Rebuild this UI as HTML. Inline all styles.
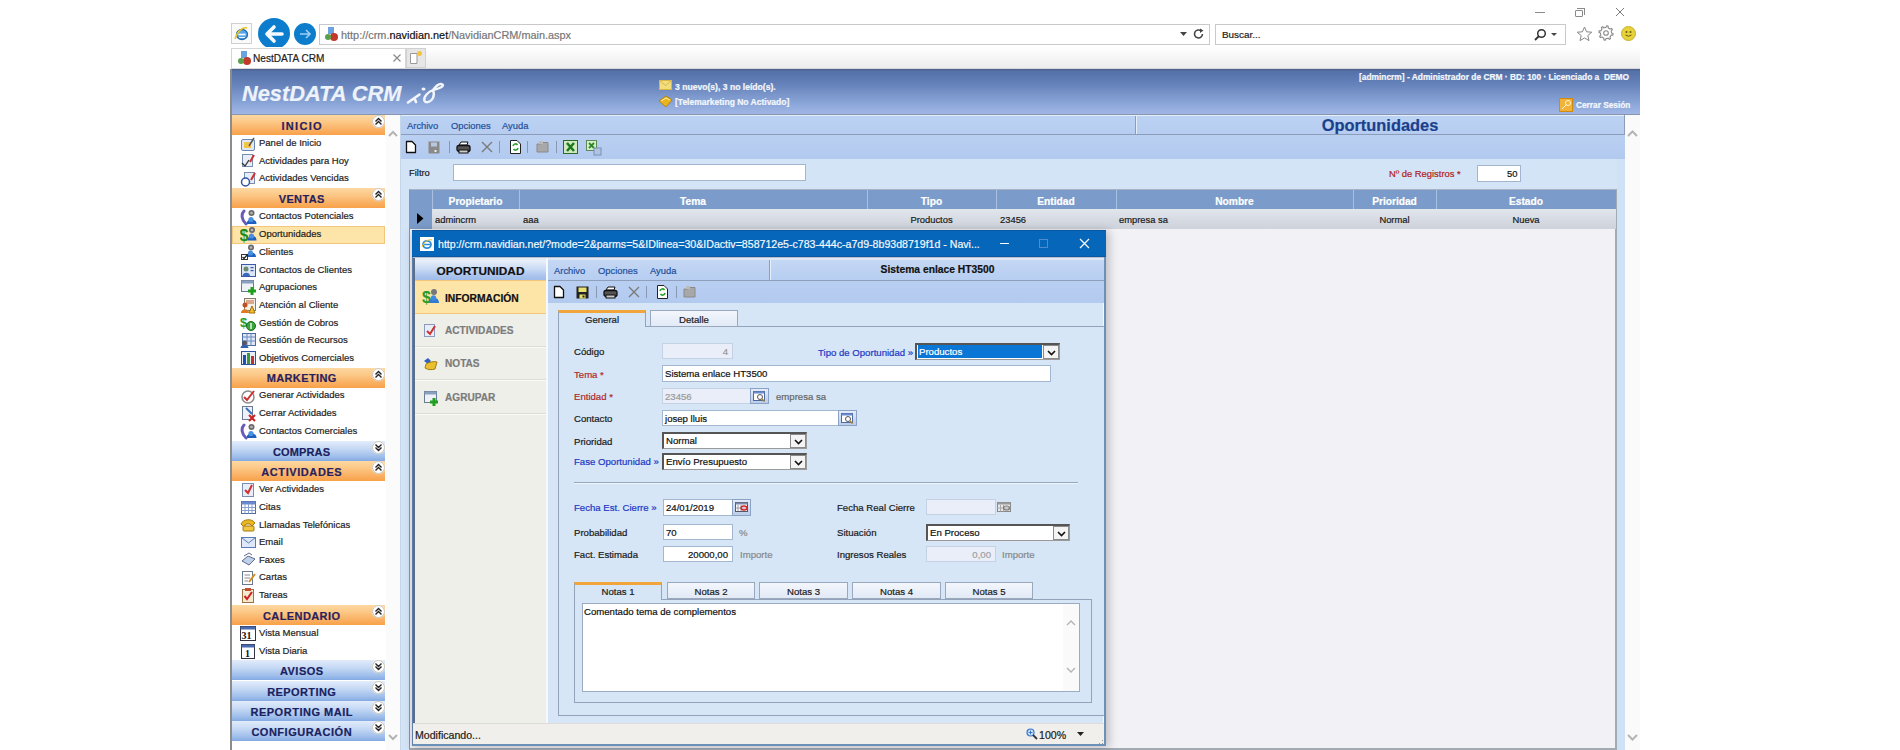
<!DOCTYPE html>
<html><head><meta charset="utf-8">
<style>
*{margin:0;padding:0;box-sizing:border-box}
html,body{width:1900px;height:750px;overflow:hidden;background:#fff;font-family:"Liberation Sans",sans-serif;color:#1a1a1a}
.a{position:absolute}
.t{position:absolute;white-space:nowrap;line-height:1;-webkit-text-stroke:0.2px currentColor}
</style></head><body>
<!-- ===== BROWSER CHROME ===== -->
<div id="chrome">
  <!-- window controls -->
  <div class="a" style="left:1535px;top:12px;width:10px;height:1px;background:#8a8a8a"></div>
  <div class="a" style="left:1575px;top:10px;width:8px;height:7px;border:1px solid #8a8a8a;border-radius:1px"></div>
  <div class="a" style="left:1577px;top:8px;width:8px;height:7px;border-top:1px solid #8a8a8a;border-right:1px solid #8a8a8a"></div>
  <svg class="a" style="left:1615px;top:7px" width="10" height="10"><path d="M1 1L9 9M9 1L1 9" stroke="#7a7a7a" stroke-width="1"/></svg>
  <!-- IE icon box -->
  <div class="a" style="left:231px;top:23px;width:21px;height:21px;border:1px solid #d0d0d0;background:#fafafa"></div>
  <svg class="a" style="left:233px;top:25px" width="17" height="17"><ellipse cx="9" cy="9.5" rx="5.5" ry="5" fill="#5aa8e8" stroke="#1f6fb8" stroke-width="1.3"/><path d="M5.5 9.5H12.5" stroke="#fff" stroke-width="1.6"/><path d="M6 12.5H12" stroke="#e8f4ff" stroke-width="1"/><path d="M2 14C4 6 10 2 14 3" stroke="#f0c020" stroke-width="1.4" fill="none"/></svg>
  <!-- back/forward -->
  <div class="a" style="left:258px;top:18px;width:32px;height:31px;border-radius:50%;background:#0b7dcc"></div>
  <svg class="a" style="left:258px;top:18px" width="32" height="31"><path d="M9 16H24M16 9L9 16L16 23" stroke="#f4faff" stroke-width="3.6" fill="none" stroke-linecap="round" stroke-linejoin="round"/></svg>
  <div class="a" style="left:294px;top:23px;width:22px;height:22px;border-radius:50%;background:#0b7dcc"></div>
  <svg class="a" style="left:294px;top:23px" width="22" height="22"><path d="M6 11H16M12 7L16 11L12 15" stroke="#9fd0f3" stroke-width="1.6" fill="none"/></svg>
  <!-- address bar -->
  <div class="a" style="left:319px;top:24px;width:891px;height:21px;border:1px solid #c9c9c9;background:#fff"></div>
  <svg class="a" style="left:323px;top:26px" width="16" height="16"><rect x="5" y="1" width="6" height="7" fill="#6aa3e0"/><circle cx="11" cy="11" r="4" fill="#c0392b"/><circle cx="5" cy="11" r="3" fill="#5aa04a"/></svg>
  <div class="t" style="left:341px;top:30px;font-size:10.9px;color:#777">http://crm.<span style="color:#111">navidian.net</span>/NavidianCRM/main.aspx</div>
  <svg class="a" style="left:1180px;top:32px" width="8" height="5"><path d="M0 0H7L3.5 4Z" fill="#444"/></svg>
  <svg class="a" style="left:1193px;top:28px" width="12" height="12"><path d="M9.5 6A4 4 0 1 1 8 2.8" stroke="#444" stroke-width="1.5" fill="none"/><path d="M7 0.5L10.5 2.5L7 5Z" fill="#444"/></svg>
  <!-- search box -->
  <div class="a" style="left:1215px;top:24px;width:351px;height:21px;border:1px solid #c9c9c9;background:#fff"></div>
  <div class="t" style="left:1222px;top:30px;font-size:9.9px;color:#222">Buscar...</div>
  <svg class="a" style="left:1534px;top:28px" width="13" height="13"><circle cx="7.5" cy="5.5" r="3.8" stroke="#333" stroke-width="1.5" fill="none"/><path d="M5 8L1 12" stroke="#333" stroke-width="1.8"/></svg>
  <svg class="a" style="left:1551px;top:33px" width="7" height="4"><path d="M0 0H6L3 3Z" fill="#444"/></svg>
  <svg class="a" style="left:1576px;top:26px" width="17" height="15"><path d="M8.5 1L10.6 5.8L15.8 6.2L11.8 9.6L13 14.6L8.5 11.9L4 14.6L5.2 9.6L1.2 6.2L6.4 5.8Z" stroke="#888" stroke-width="1" fill="none"/></svg>
  <svg class="a" style="left:1598px;top:25px" width="16" height="16"><path d="M13.60 8.00 L15.17 8.68 L14.88 10.12 L13.17 10.14 L11.96 11.96 L12.59 13.55 L11.37 14.36 L10.14 13.17 L8.00 13.60 L7.32 15.17 L5.88 14.88 L5.86 13.17 L4.04 11.96 L2.45 12.59 L1.64 11.37 L2.83 10.14 L2.40 8.00 L0.83 7.32 L1.12 5.88 L2.83 5.86 L4.04 4.04 L3.41 2.45 L4.63 1.64 L5.86 2.83 L8.00 2.40 L8.68 0.83 L10.12 1.12 L10.14 2.83 L11.96 4.04 L13.55 3.41 L14.36 4.63 L13.17 5.86Z" stroke="#8a8a8a" stroke-width="1.1" fill="none" stroke-linejoin="round"/><circle cx="8" cy="8" r="2.3" stroke="#8a8a8a" stroke-width="1.1" fill="none"/></svg>
  <div class="a" style="left:1621px;top:26px;width:15px;height:15px;border-radius:50%;background:#e6d23a;border:1px solid #c9b02a"></div>
  <svg class="a" style="left:1621px;top:26px" width="15" height="15"><circle cx="5.5" cy="6" r="1" fill="#6b5a10"/><circle cx="9.5" cy="6" r="1" fill="#6b5a10"/><path d="M4.5 9Q7.5 11.5 10.5 9" stroke="#6b5a10" stroke-width="1" fill="none"/></svg>
  <!-- tab strip -->
  <div class="a" style="left:231px;top:47px;width:1409px;height:22px;background:linear-gradient(#fff,#ececec)"></div>
  <div class="a" style="left:231px;top:48px;width:175px;height:21px;border:1px solid #d6d6d6;border-bottom:none;background:#fff"></div>
  <svg class="a" style="left:236px;top:50px" width="16" height="16"><rect x="5" y="1" width="6" height="7" fill="#6aa3e0"/><circle cx="11" cy="11" r="4" fill="#c0392b"/><circle cx="5" cy="11" r="3" fill="#5aa04a"/></svg>
  <div class="t" style="left:253px;top:53.5px;font-size:10.1px;color:#222">NestDATA CRM</div>
  <svg class="a" style="left:393px;top:54px" width="8" height="8"><path d="M0.5 0.5L7.5 7.5M7.5 0.5L0.5 7.5" stroke="#888" stroke-width="1.2"/></svg>
  <div class="a" style="left:406px;top:48px;width:20px;height:20px;border:1px solid #d0d0d0;background:#e6e6e6"></div>
  <svg class="a" style="left:409px;top:50px" width="14" height="15"><path d="M1.5 3.5H8V13.5H1.5Z" fill="#fff" stroke="#999"/><circle cx="10.5" cy="3.5" r="2.5" fill="#f5c33b"/></svg>
</div>

<!-- ===== APP ===== -->
<div class="a" style="left:230px;top:69px;width:2px;height:681px;background:#8c8c8c"></div>
<!-- header -->
<div class="a" style="left:232px;top:68px;width:1408px;height:1px;background:#d8d8dc"></div>
<div class="a" style="left:232px;top:69px;width:1408px;height:46px;background:linear-gradient(#4b5d86 0px,#5470a8 2px,#6783bb 35%,#8aa6d8 75%,#a3b8e6 100%)"></div>
<div class="t" style="left:242px;top:83px;font-size:21.8px;font-weight:bold;font-style:italic;color:#eef3fb">NestDATA CRM</div>
<svg class="a" style="left:400px;top:76px" width="50" height="34"><path d="M8 26.5L19.5 18.5M14.5 22.5L16 26" stroke="#f2f6fc" stroke-width="2.6" stroke-linecap="round" fill="none"/><ellipse cx="23.5" cy="13" rx="2" ry="1.5" fill="#f2f6fc"/><path d="M33 14C36 10 40 7 42.5 8.5C44.5 10 40 12.5 33 14C28 16 23 21 24.5 25C26 27.5 31 26 33 22C34.5 19 34 16.5 33 14Z" stroke="#f2f6fc" stroke-width="2.4" fill="none" stroke-linejoin="round"/></svg>
<svg class="a" style="left:659px;top:80px" width="13" height="10"><rect x="0.5" y="0.5" width="12" height="9" fill="#f3dc7a" stroke="#d9b64a"/><path d="M0.5 0.5L6.5 5.5L12.5 0.5" stroke="#d9b64a" fill="none"/></svg>
<div class="t" style="left:675px;top:82.5px;font-size:8.6px;font-weight:bold;color:#f4f7fc">3 nuevo(s), 3 no leído(s).</div>
<svg class="a" style="left:658px;top:95px" width="15" height="13"><path d="M1 6L8 1L14 5L8 12Z" fill="#e8b520" stroke="#b98410"/><path d="M3 6L8 3L12 5" stroke="#fff3a0" fill="none"/></svg>
<div class="t" style="left:675px;top:97.5px;font-size:8.5px;font-weight:bold;color:#f4f7fc">[Telemarketing No Activado]</div>
<div class="t" style="left:1359px;top:73px;font-size:8.4px;font-weight:bold;color:#f4f7fc">[admincrm] - Administrador de CRM · BD: 100 · Licenciado a&nbsp; DEMO</div>
<svg class="a" style="left:1559px;top:98px" width="14" height="14"><rect x="0.5" y="0.5" width="13" height="13" fill="#f2b23a" stroke="#d08a10"/><circle cx="9" cy="5" r="2.5" stroke="#fff7d0" fill="none"/><path d="M7.5 6.5L3 11" stroke="#fff7d0"/></svg>
<div class="t" style="left:1576px;top:101px;font-size:8.3px;font-weight:bold;color:#f4f7fc">Cerrar Sesión</div>

<div class="a" style="left:232px;top:115px;width:154px;height:635px;background:#fff"></div>
<div class="a" style="left:386px;top:115px;width:14px;height:635px;background:#fbfbfb"></div>
<svg class="a" style="left:388px;top:130px" width="10" height="7"><path d="M1 6L5 2L9 6" stroke="#b4b4b4" stroke-width="2" fill="none"/></svg>
<svg class="a" style="left:388px;top:734px" width="10" height="7"><path d="M1 1L5 5L9 1" stroke="#b4b4b4" stroke-width="2" fill="none"/></svg>
<div class="a" style="left:232px;top:115px;width:153px;height:20px;background:linear-gradient(#fdd8a2 0%,#fcc886 35%,#fab266 70%,#f8a24a 100%)"></div>
<div class="t" style="left:232px;top:120.5px;width:139px;text-align:center;font-size:11px;font-weight:bold;letter-spacing:1.3px;text-indent:1.3px;color:#2a1f5e">INICIO</div>
<div class="a" style="left:372px;top:115px;width:13px;height:13px;border-radius:50%;background:#fff;border:1px solid #c9c2b6;box-shadow:0 0 1px #fff"></div>
<svg class="a" style="left:372px;top:115px" width="13" height="13"><path d="M3.5 6.5L6.5 3.5L9.5 6.5M3.5 9.5L6.5 6.5L9.5 9.5" stroke="#222" stroke-width="1.4" fill="none"/></svg>
<svg class="a" style="left:240px;top:136px" width="17" height="17"><rect x="1.5" y="3.5" width="13" height="11" rx="1.5" fill="#dfe8f4" stroke="#6b87b0"/><rect x="4" y="6" width="7" height="6" fill="#f0c64a"/><path d="M9 10L14 2" stroke="#555" stroke-width="1.5"/></svg>
<div class="t" style="left:259px;top:138.4px;font-size:9.5px;font-weight:normal;color:#1e1e1e;">Panel de Inicio</div>
<svg class="a" style="left:240px;top:153px" width="17" height="17"><rect x="2.5" y="1.5" width="10" height="12" fill="#e8eef8" stroke="#7a8fb0"/><path d="M2 10L5 13L9 7" stroke="#333" stroke-width="1.3" fill="none"/><path d="M10 9L14 2" stroke="#d03030" stroke-width="2"/></svg>
<div class="t" style="left:259px;top:155.9px;font-size:9.5px;font-weight:normal;color:#1e1e1e;">Actividades para Hoy</div>
<svg class="a" style="left:240px;top:171px" width="17" height="17"><rect x="4.5" y="1.5" width="10" height="11" fill="#e8eef8" stroke="#7a8fb0"/><circle cx="5.5" cy="11" r="4" fill="#fff" stroke="#3050a0" stroke-width="1.5"/><path d="M11 9L15 2" stroke="#d03030" stroke-width="2"/></svg>
<div class="t" style="left:259px;top:173.4px;font-size:9.5px;font-weight:normal;color:#1e1e1e;">Actividades Vencidas</div>
<div class="a" style="left:232px;top:188px;width:153px;height:20px;background:linear-gradient(#fdd8a2 0%,#fcc886 35%,#fab266 70%,#f8a24a 100%)"></div>
<div class="t" style="left:232px;top:193.5px;width:139px;text-align:center;font-size:11px;font-weight:bold;letter-spacing:0.35px;text-indent:0.35px;color:#2a1f5e">VENTAS</div>
<div class="a" style="left:372px;top:188px;width:13px;height:13px;border-radius:50%;background:#fff;border:1px solid #c9c2b6;box-shadow:0 0 1px #fff"></div>
<svg class="a" style="left:372px;top:188px" width="13" height="13"><path d="M3.5 6.5L6.5 3.5L9.5 6.5M3.5 9.5L6.5 6.5L9.5 9.5" stroke="#222" stroke-width="1.4" fill="none"/></svg>
<svg class="a" style="left:240px;top:209px" width="17" height="17"><path d="M4 2C1 5 1.5 11 6 15" stroke="#6a5ab8" stroke-width="3" fill="none" stroke-linecap="round"/><circle cx="11.5" cy="4" r="3" fill="#6a6a6a"/><circle cx="11.5" cy="4" r="1.3" fill="#b8b8b8"/><path d="M6.5 15C6.5 8.5 16.5 8.5 16.5 15Z" fill="#1f5fc0"/><circle cx="11" cy="10.5" r="2.6" fill="#4a90e0"/></svg>
<div class="t" style="left:259px;top:211.4px;font-size:9.5px;font-weight:normal;color:#1e1e1e;">Contactos Potenciales</div>
<div class="a" style="left:232px;top:225.7px;width:153px;height:18px;background:#fde4a8;border:1px solid #f3c67c"></div>
<svg class="a" style="left:240px;top:226px" width="17" height="17"><text x="-0.5" y="14.5" font-family="Liberation Sans" font-weight="bold" font-size="16" fill="#1e8a1e">$</text><circle cx="12" cy="4" r="3" fill="#6a6a6a"/><circle cx="12" cy="4" r="1.3" fill="#b8b8b8"/><path d="M7.5 14.5C7.5 8 16.5 8 16.5 14.5Z" fill="#1f5fc0"/><circle cx="11.5" cy="10" r="2.6" fill="#4a90e0"/></svg>
<div class="t" style="left:259px;top:229.1px;font-size:9.5px;font-weight:normal;color:#1e1e1e;">Oportunidades</div>
<svg class="a" style="left:240px;top:244px" width="17" height="17"><circle cx="11" cy="3.5" r="3" fill="#6a6a6a"/><circle cx="11" cy="3.5" r="1.3" fill="#b8b8b8"/><path d="M6.5 13C6.5 7 16 7 16 13Z" fill="#1f5fc0"/><circle cx="10.5" cy="9" r="2.6" fill="#4a90e0"/><rect x="1.5" y="10.5" width="6" height="5" fill="#fff" stroke="#333"/><path d="M2.5 13L4 14.5L7.5 10.5" stroke="#222" stroke-width="1.2" fill="none"/></svg>
<div class="t" style="left:259px;top:246.8px;font-size:9.5px;font-weight:normal;color:#1e1e1e;">Clientes</div>
<svg class="a" style="left:240px;top:262px" width="17" height="17"><rect x="1.5" y="2.5" width="14" height="12" fill="#dbe6f6" stroke="#3a5aa8"/><circle cx="6" cy="7" r="2.5" fill="#6a8a6a"/><path d="M2.5 14C2.5 9.5 10 9.5 10 14Z" fill="#3a6ac0"/><rect x="10.5" y="5" width="3" height="1.2" fill="#3a5aa8"/><rect x="10.5" y="8" width="3" height="1.2" fill="#3a5aa8"/></svg>
<div class="t" style="left:259px;top:264.5px;font-size:9.5px;font-weight:normal;color:#1e1e1e;">Contactos de Clientes</div>
<svg class="a" style="left:240px;top:279px" width="17" height="17"><rect x="1.5" y="1.5" width="12" height="11" fill="#eef2f8" stroke="#6a7a90"/><rect x="1.5" y="1.5" width="12" height="3" fill="#8aa0c0"/><path d="M12 8V16M8 12H16" stroke="#21a020" stroke-width="3"/></svg>
<div class="t" style="left:259px;top:282.2px;font-size:9.5px;font-weight:normal;color:#1e1e1e;">Agrupaciones</div>
<svg class="a" style="left:240px;top:297px" width="17" height="17"><rect x="4.5" y="1.5" width="11" height="12" fill="#f4f0e8" stroke="#8a7a6a"/><path d="M6 4H14M6 6H14" stroke="#c06030"/><circle cx="5" cy="8" r="2.5" fill="#c05020"/><path d="M1 16C1 11 9 11 9 16Z" fill="#e07a20"/><path d="M9 16L12 9L15 16Z" fill="#f0c030" stroke="#a07010"/></svg>
<div class="t" style="left:259px;top:299.9px;font-size:9.5px;font-weight:normal;color:#1e1e1e;">Atención al Cliente</div>
<svg class="a" style="left:240px;top:315px" width="17" height="17"><text x="0" y="12" font-family="Liberation Sans" font-weight="bold" font-size="13" fill="#2a9a2a">$</text><circle cx="11" cy="11" r="4.5" fill="#3aa53a" stroke="#1c6a1c"/><path d="M11 8V14" stroke="#fff" stroke-width="1.3"/></svg>
<div class="t" style="left:259px;top:317.59999999999997px;font-size:9.5px;font-weight:normal;color:#1e1e1e;">Gestión de Cobros</div>
<svg class="a" style="left:240px;top:332px" width="17" height="17"><rect x="2.5" y="1.5" width="13" height="12" fill="#dfe8f4" stroke="#4a6aa0"/><path d="M2.5 5H15.5M2.5 9H15.5M7 1.5V13.5M11 1.5V13.5" stroke="#6a8ac0"/><circle cx="4.5" cy="11" r="2.5" fill="#556"/><path d="M0.5 16C0.5 12 8.5 12 8.5 16Z" fill="#3060b0"/></svg>
<div class="t" style="left:259px;top:335.29999999999995px;font-size:9.5px;font-weight:normal;color:#1e1e1e;">Gestión de Recursos</div>
<svg class="a" style="left:240px;top:350px" width="17" height="17"><rect x="1.5" y="1.5" width="14" height="13" fill="#e8eef8" stroke="#3050a0"/><rect x="3" y="5" width="3" height="9" fill="#2050b0"/><rect x="7" y="3" width="3" height="11" fill="#3a9a3a"/><rect x="11" y="6" width="3" height="8" fill="#c03030"/></svg>
<div class="t" style="left:259px;top:353.0px;font-size:9.5px;font-weight:normal;color:#1e1e1e;">Objetivos Comerciales</div>
<div class="a" style="left:232px;top:367.5px;width:153px;height:20px;background:linear-gradient(#fdd8a2 0%,#fcc886 35%,#fab266 70%,#f8a24a 100%)"></div>
<div class="t" style="left:232px;top:373.0px;width:139px;text-align:center;font-size:11px;font-weight:bold;letter-spacing:0.38px;text-indent:0.38px;color:#2a1f5e">MARKETING</div>
<div class="a" style="left:372px;top:367.5px;width:13px;height:13px;border-radius:50%;background:#fff;border:1px solid #c9c2b6;box-shadow:0 0 1px #fff"></div>
<svg class="a" style="left:372px;top:367.5px" width="13" height="13"><path d="M3.5 6.5L6.5 3.5L9.5 6.5M3.5 9.5L6.5 6.5L9.5 9.5" stroke="#222" stroke-width="1.4" fill="none"/></svg>
<svg class="a" style="left:240px;top:388px" width="17" height="17"><circle cx="8" cy="9" r="6" fill="none" stroke="#8a8a8a" stroke-width="1.5"/><path d="M4 9L7 12L14 3" stroke="#d03030" stroke-width="2" fill="none"/></svg>
<div class="t" style="left:259px;top:390.4px;font-size:9.5px;font-weight:normal;color:#1e1e1e;">Generar Actividades</div>
<svg class="a" style="left:240px;top:405px" width="17" height="17"><rect x="2.5" y="1.5" width="10" height="13" fill="#eef2f8" stroke="#6a7a90"/><path d="M6 3L12 9" stroke="#3a70c0" stroke-width="2"/><path d="M9 10L15 16M15 10L9 16" stroke="#d02020" stroke-width="2"/></svg>
<div class="t" style="left:259px;top:408.09999999999997px;font-size:9.5px;font-weight:normal;color:#1e1e1e;">Cerrar Actividades</div>
<svg class="a" style="left:240px;top:423px" width="17" height="17"><path d="M4 2C1 5 1.5 11 6 15" stroke="#6a5ab8" stroke-width="3" fill="none" stroke-linecap="round"/><circle cx="11.5" cy="4" r="3" fill="#6a6a6a"/><circle cx="11.5" cy="4" r="1.3" fill="#b8b8b8"/><path d="M6.5 15C6.5 8.5 16.5 8.5 16.5 15Z" fill="#1f5fc0"/><circle cx="11" cy="10.5" r="2.6" fill="#4a90e0"/></svg>
<div class="t" style="left:259px;top:425.79999999999995px;font-size:9.5px;font-weight:normal;color:#1e1e1e;">Contactos Comerciales</div>
<div class="a" style="left:232px;top:441px;width:153px;height:20px;background:linear-gradient(#e2ecfb 0%,#c4d8f4 40%,#9dbdea 80%,#84aae4 100%)"></div>
<div class="t" style="left:232px;top:446.5px;width:139px;text-align:center;font-size:11px;font-weight:bold;letter-spacing:0.15px;text-indent:0.15px;color:#1a2262">COMPRAS</div>
<div class="a" style="left:372px;top:441px;width:13px;height:13px;border-radius:50%;background:#fff;border:1px solid #c9c2b6;box-shadow:0 0 1px #fff"></div>
<svg class="a" style="left:372px;top:441px" width="13" height="13"><path d="M3.5 3.5L6.5 6.5L9.5 3.5M3.5 6.5L6.5 9.5L9.5 6.5" stroke="#222" stroke-width="1.4" fill="none"/></svg>
<div class="a" style="left:232px;top:461px;width:153px;height:20px;background:linear-gradient(#fdd8a2 0%,#fcc886 35%,#fab266 70%,#f8a24a 100%)"></div>
<div class="t" style="left:232px;top:466.5px;width:139px;text-align:center;font-size:11px;font-weight:bold;letter-spacing:0.58px;text-indent:0.58px;color:#2a1f5e">ACTIVIDADES</div>
<div class="a" style="left:372px;top:461px;width:13px;height:13px;border-radius:50%;background:#fff;border:1px solid #c9c2b6;box-shadow:0 0 1px #fff"></div>
<svg class="a" style="left:372px;top:461px" width="13" height="13"><path d="M3.5 6.5L6.5 3.5L9.5 6.5M3.5 9.5L6.5 6.5L9.5 9.5" stroke="#222" stroke-width="1.4" fill="none"/></svg>
<svg class="a" style="left:240px;top:482px" width="17" height="17"><rect x="2.5" y="1.5" width="11" height="13" fill="#e8eef8" stroke="#7a8fb0"/><path d="M5 8L8 11L12 3" stroke="#d03030" stroke-width="2" fill="none"/></svg>
<div class="t" style="left:259px;top:484.4px;font-size:9.5px;font-weight:normal;color:#1e1e1e;">Ver Actividades</div>
<svg class="a" style="left:240px;top:499px" width="17" height="17"><rect x="1.5" y="2.5" width="14" height="12" fill="#fff" stroke="#4a6aa0"/><rect x="1.5" y="2.5" width="14" height="3" fill="#6a8ad0"/><path d="M1.5 8.5H15.5M1.5 11.5H15.5M5 5V14.5M8.5 5V14.5M12 5V14.5" stroke="#8aa0d0"/></svg>
<div class="t" style="left:259px;top:502.0px;font-size:9.5px;font-weight:normal;color:#1e1e1e;">Citas</div>
<svg class="a" style="left:240px;top:517px" width="17" height="17"><path d="M1 7C3 2 12 1 15 6L12 9L10 7L6 7L4 10Z" fill="#e8b820" stroke="#a87810"/><rect x="3" y="9" width="11" height="5" rx="1" fill="#f0c840" stroke="#a87810"/></svg>
<div class="t" style="left:259px;top:519.6px;font-size:9.5px;font-weight:normal;color:#1e1e1e;">Llamadas Telefónicas</div>
<svg class="a" style="left:240px;top:534px" width="17" height="17"><rect x="1.5" y="3.5" width="14" height="10" fill="#dfe8f8" stroke="#5a7ac0"/><path d="M1.5 3.5L8.5 9L15.5 3.5" stroke="#5a7ac0" fill="none"/></svg>
<div class="t" style="left:259px;top:537.1999999999999px;font-size:9.5px;font-weight:normal;color:#1e1e1e;">Email</div>
<svg class="a" style="left:240px;top:552px" width="17" height="17"><path d="M2 9L8 4L15 7L9 13Z" fill="#c0d0e8" stroke="#5a6a90"/><path d="M4 4L9 1L12 3" stroke="#5a6a90" fill="#fff"/></svg>
<div class="t" style="left:259px;top:554.8px;font-size:9.5px;font-weight:normal;color:#1e1e1e;">Faxes</div>
<svg class="a" style="left:240px;top:570px" width="17" height="17"><rect x="2.5" y="1.5" width="10" height="13" fill="#fff" stroke="#6a7a90"/><path d="M4.5 5H10M4.5 8H10M4.5 11H8" stroke="#889"/><path d="M9 12L15 4" stroke="#d09020" stroke-width="2"/></svg>
<div class="t" style="left:259px;top:572.4px;font-size:9.5px;font-weight:normal;color:#1e1e1e;">Cartas</div>
<svg class="a" style="left:240px;top:587px" width="17" height="17"><rect x="2.5" y="2.5" width="11" height="13" fill="#f4ead0" stroke="#a07040"/><rect x="5" y="1" width="6" height="3" fill="#c05030"/><path d="M4.5 9L7 12L12 5" stroke="#d02020" stroke-width="2" fill="none"/></svg>
<div class="t" style="left:259px;top:590.0px;font-size:9.5px;font-weight:normal;color:#1e1e1e;">Tareas</div>
<div class="a" style="left:232px;top:605px;width:153px;height:20px;background:linear-gradient(#fdd8a2 0%,#fcc886 35%,#fab266 70%,#f8a24a 100%)"></div>
<div class="t" style="left:232px;top:610.5px;width:139px;text-align:center;font-size:11px;font-weight:bold;letter-spacing:0.4px;text-indent:0.4px;color:#2a1f5e">CALENDARIO</div>
<div class="a" style="left:372px;top:605px;width:13px;height:13px;border-radius:50%;background:#fff;border:1px solid #c9c2b6;box-shadow:0 0 1px #fff"></div>
<svg class="a" style="left:372px;top:605px" width="13" height="13"><path d="M3.5 6.5L6.5 3.5L9.5 6.5M3.5 9.5L6.5 6.5L9.5 9.5" stroke="#222" stroke-width="1.4" fill="none"/></svg>
<svg class="a" style="left:240px;top:625px" width="17" height="17"><rect x="0.5" y="1.5" width="15" height="14" fill="#fff" stroke="#334"/><rect x="0.5" y="1.5" width="15" height="3" fill="#4a6ab0"/><text x="1.5" y="14" font-family="Liberation Serif" font-weight="bold" font-size="10" fill="#111">31</text></svg>
<div class="t" style="left:259px;top:627.9px;font-size:9.5px;font-weight:normal;color:#1e1e1e;">Vista Mensual</div>
<svg class="a" style="left:240px;top:643px" width="17" height="17"><rect x="1.5" y="1.5" width="13" height="14" fill="#fff" stroke="#334"/><rect x="1.5" y="1.5" width="13" height="3" fill="#4a6ab0"/><text x="5" y="14" font-family="Liberation Serif" font-weight="bold" font-size="10" fill="#111">1</text></svg>
<div class="t" style="left:259px;top:645.6999999999999px;font-size:9.5px;font-weight:normal;color:#1e1e1e;">Vista Diaria</div>
<div class="a" style="left:232px;top:660px;width:153px;height:20px;background:linear-gradient(#e2ecfb 0%,#c4d8f4 40%,#9dbdea 80%,#84aae4 100%)"></div>
<div class="t" style="left:232px;top:665.5px;width:139px;text-align:center;font-size:11px;font-weight:bold;letter-spacing:0.49px;text-indent:0.49px;color:#1a2262">AVISOS</div>
<div class="a" style="left:372px;top:660px;width:13px;height:13px;border-radius:50%;background:#fff;border:1px solid #c9c2b6;box-shadow:0 0 1px #fff"></div>
<svg class="a" style="left:372px;top:660px" width="13" height="13"><path d="M3.5 3.5L6.5 6.5L9.5 3.5M3.5 6.5L6.5 9.5L9.5 6.5" stroke="#222" stroke-width="1.4" fill="none"/></svg>
<div class="a" style="left:232px;top:681px;width:153px;height:20px;background:linear-gradient(#e2ecfb 0%,#c4d8f4 40%,#9dbdea 80%,#84aae4 100%)"></div>
<div class="t" style="left:232px;top:686.5px;width:139px;text-align:center;font-size:11px;font-weight:bold;letter-spacing:0.4px;text-indent:0.4px;color:#1a2262">REPORTING</div>
<div class="a" style="left:372px;top:681px;width:13px;height:13px;border-radius:50%;background:#fff;border:1px solid #c9c2b6;box-shadow:0 0 1px #fff"></div>
<svg class="a" style="left:372px;top:681px" width="13" height="13"><path d="M3.5 3.5L6.5 6.5L9.5 3.5M3.5 6.5L6.5 9.5L9.5 6.5" stroke="#222" stroke-width="1.4" fill="none"/></svg>
<div class="a" style="left:232px;top:701px;width:153px;height:20px;background:linear-gradient(#e2ecfb 0%,#c4d8f4 40%,#9dbdea 80%,#84aae4 100%)"></div>
<div class="t" style="left:232px;top:706.5px;width:139px;text-align:center;font-size:11px;font-weight:bold;letter-spacing:0.52px;text-indent:0.52px;color:#1a2262">REPORTING MAIL</div>
<div class="a" style="left:372px;top:701px;width:13px;height:13px;border-radius:50%;background:#fff;border:1px solid #c9c2b6;box-shadow:0 0 1px #fff"></div>
<svg class="a" style="left:372px;top:701px" width="13" height="13"><path d="M3.5 3.5L6.5 6.5L9.5 3.5M3.5 6.5L6.5 9.5L9.5 6.5" stroke="#222" stroke-width="1.4" fill="none"/></svg>
<div class="a" style="left:232px;top:721px;width:153px;height:20px;background:linear-gradient(#e2ecfb 0%,#c4d8f4 40%,#9dbdea 80%,#84aae4 100%)"></div>
<div class="t" style="left:232px;top:726.5px;width:139px;text-align:center;font-size:11px;font-weight:bold;letter-spacing:0.51px;text-indent:0.51px;color:#1a2262">CONFIGURACIÓN</div>
<div class="a" style="left:372px;top:721px;width:13px;height:13px;border-radius:50%;background:#fff;border:1px solid #c9c2b6;box-shadow:0 0 1px #fff"></div>
<svg class="a" style="left:372px;top:721px" width="13" height="13"><path d="M3.5 3.5L6.5 6.5L9.5 3.5M3.5 6.5L6.5 9.5L9.5 6.5" stroke="#222" stroke-width="1.4" fill="none"/></svg>

<div class="a" style="left:232px;top:114px;width:1408px;height:1px;background:#8796ae"></div>

<div class="a" style="left:400px;top:115px;width:1225px;height:635px;background:#d4e4f7"></div>
<div class="a" style="left:400px;top:115px;width:1px;height:635px;background:#c6d6ea"></div>
<div class="a" style="left:401px;top:115px;width:1224px;height:20px;background:linear-gradient(#e4effb 0,#e4effb 1px,#bcd2f3 1px,#b6cdf1 100%);border-bottom:1px solid #8a9cb8"></div>
<div class="t" style="left:407px;top:120.5px;font-size:9.4px;font-weight:normal;color:#1f4f9a;">Archivo</div>
<div class="t" style="left:451px;top:120.5px;font-size:9.4px;font-weight:normal;color:#1f4f9a;">Opciones</div>
<div class="t" style="left:502px;top:120.5px;font-size:9.4px;font-weight:normal;color:#1f4f9a;">Ayuda</div>
<div class="a" style="left:1135px;top:116px;width:1px;height:18px;background:#8a9cb8"></div>
<div class="a" style="left:1136px;top:116px;width:1px;height:18px;background:#e4effb"></div>
<div class="a" style="left:1624px;top:115px;width:1px;height:20px;background:#8a9cb8"></div>
<div class="t" style="left:1136px;top:117px;width:488px;text-align:center;font-size:16.4px;font-weight:bold;color:#1c3f8c">Oportunidades</div>
<div class="a" style="left:401px;top:135px;width:1224px;height:24px;background:linear-gradient(#bad0f2,#b2caef)"></div>
<svg class="a" style="left:405px;top:140px" width="12" height="14"><path d="M1.5 1.5H7L10.5 5V12.5H1.5Z" fill="#fff" stroke="#111" stroke-width="1.3" stroke-linejoin="round"/></svg>
<svg class="a" style="left:428px;top:141px" width="12" height="13"><rect x="0.5" y="0.5" width="11" height="12" fill="#8a8a8a"/><rect x="3" y="1.5" width="6" height="4" fill="#b8c8e0"/><rect x="6.5" y="9" width="2" height="2" fill="#eee"/></svg>
<svg class="a" style="left:449px;top:141px" width="1" height="13"><path d="M0.5 0V12" stroke="#8898b0"/></svg>
<svg class="a" style="left:456px;top:141px" width="15" height="13"><path d="M3 4L5 1H12L11 4Z" fill="#fff" stroke="#111"/><rect x="1" y="4.5" width="13" height="6" rx="2" fill="#555" stroke="#111" stroke-width="1.3"/><rect x="3" y="9" width="9" height="3" fill="#ccc" stroke="#111"/></svg>
<svg class="a" style="left:481px;top:141px" width="12" height="12"><path d="M1 1L11 11M11 1L1 11" stroke="#7a7a7a" stroke-width="1.4"/></svg>
<svg class="a" style="left:499px;top:141px" width="1" height="13"><path d="M0.5 0V12" stroke="#8898b0"/></svg>
<svg class="a" style="left:509px;top:140px" width="13" height="14"><path d="M1.5 0.5H8L11.5 4V13.5H1.5Z" fill="#fff" stroke="#222"/><path d="M4 6A2.5 2.5 0 0 1 8.5 5M9 8A2.5 2.5 0 0 1 4.5 9" stroke="#30a030" stroke-width="1.6" fill="none"/></svg>
<svg class="a" style="left:527px;top:141px" width="1" height="13"><path d="M0.5 0V12" stroke="#8898b0"/></svg>
<svg class="a" style="left:536px;top:140px" width="13" height="13"><path d="M1 4H5L6 2.5H12V12H1Z" fill="#a8a8a8" stroke="#8a8a8a"/><rect x="3" y="1" width="4" height="3" fill="#bbb"/></svg>
<svg class="a" style="left:556px;top:141px" width="1" height="13"><path d="M0.5 0V12" stroke="#8898b0"/></svg>
<svg class="a" style="left:563px;top:140px" width="15" height="14"><rect x="0.5" y="0.5" width="14" height="13" fill="#cfe8c0" stroke="#2a6a2a"/><path d="M4 3L11 11M11 3L4 11" stroke="#1a7a1a" stroke-width="2.5"/></svg>
<svg class="a" style="left:586px;top:140px" width="16" height="16"><rect x="0.5" y="0.5" width="10" height="10" fill="#d8ecc8" stroke="#5a8a5a"/><path d="M3 3L8 8M8 3L3 8" stroke="#2a8a2a" stroke-width="1.8"/><rect x="8" y="8" width="7" height="7" fill="#b0c4e0" stroke="#7a90b8"/></svg>
<div class="t" style="left:409px;top:167.5px;font-size:9.4px;font-weight:normal;color:#1a1a1a;">Filtro</div>
<div class="a" style="left:453px;top:164px;width:353px;height:17px;background:#fff;border:1px solid #a3b5cf"></div>
<div class="t" style="left:1389px;top:168.5px;font-size:9.4px;font-weight:normal;color:#b01c1c;">Nº de Registros *</div>
<div class="a" style="left:1477px;top:165px;width:44px;height:17px;background:#fff;border:1px solid #a3b5cf"></div>
<div class="t" style="left:1507px;top:169px;font-size:9.4px;font-weight:normal;color:#111;">50</div>
<div class="a" style="left:409px;top:189px;width:209px;height:561px;"></div>
<div class="a" style="left:409px;top:189px;width:1208px;height:561px;background:#f1f1f6;border:2px solid #a2aab4;border-top:1px solid #a8b4c4;border-left:1px solid #8e969e"></div>
<div class="a" style="left:410px;top:190px;width:1206px;height:19px;background:#7b9cca"></div>
<div class="a" style="left:432px;top:190px;width:1px;height:19px;background:#a9c0e2"></div>
<div class="t" style="left:432px;top:196.5px;width:87px;text-align:center;font-size:10.2px;font-weight:bold;color:#fff">Propietario</div>
<div class="a" style="left:519px;top:190px;width:1px;height:19px;background:#a9c0e2"></div>
<div class="t" style="left:519px;top:196.5px;width:348px;text-align:center;font-size:10.2px;font-weight:bold;color:#fff">Tema</div>
<div class="a" style="left:867px;top:190px;width:1px;height:19px;background:#a9c0e2"></div>
<div class="t" style="left:867px;top:196.5px;width:129px;text-align:center;font-size:10.2px;font-weight:bold;color:#fff">Tipo</div>
<div class="a" style="left:996px;top:190px;width:1px;height:19px;background:#a9c0e2"></div>
<div class="t" style="left:996px;top:196.5px;width:120px;text-align:center;font-size:10.2px;font-weight:bold;color:#fff">Entidad</div>
<div class="a" style="left:1116px;top:190px;width:1px;height:19px;background:#a9c0e2"></div>
<div class="t" style="left:1116px;top:196.5px;width:237px;text-align:center;font-size:10.2px;font-weight:bold;color:#fff">Nombre</div>
<div class="a" style="left:1353px;top:190px;width:1px;height:19px;background:#a9c0e2"></div>
<div class="t" style="left:1353px;top:196.5px;width:83px;text-align:center;font-size:10.2px;font-weight:bold;color:#fff">Prioridad</div>
<div class="a" style="left:1436px;top:190px;width:1px;height:19px;background:#a9c0e2"></div>
<div class="t" style="left:1436px;top:196.5px;width:180px;text-align:center;font-size:10.2px;font-weight:bold;color:#fff">Estado</div>
<div class="a" style="left:411px;top:209px;width:1205px;height:20px;background:linear-gradient(#e1e5ec,#cdd2db)"></div>
<div class="a" style="left:410px;top:209px;width:22px;height:20px;background:#7b9cca"></div>
<svg class="a" style="left:417px;top:213px" width="7" height="11"><path d="M0 0L6.5 5.5L0 11Z" fill="#000"/></svg>
<div class="t" style="left:435px;top:214.5px;font-size:9.4px;font-weight:normal;color:#1a1a1a;">admincrm</div>
<div class="t" style="left:523px;top:214.5px;font-size:9.4px;font-weight:normal;color:#1a1a1a;">aaa</div>
<div class="t" style="left:867px;top:214.5px;width:129px;text-align:center;font-size:9.4px;color:#1a1a1a">Productos</div>
<div class="t" style="left:1000px;top:214.5px;font-size:9.4px;font-weight:normal;color:#1a1a1a;">23456</div>
<div class="t" style="left:1119px;top:214.5px;font-size:9.4px;font-weight:normal;color:#1a1a1a;">empresa sa</div>
<div class="t" style="left:1353px;top:214.5px;width:83px;text-align:center;font-size:9.4px;color:#1a1a1a">Normal</div>
<div class="t" style="left:1436px;top:214.5px;width:180px;text-align:center;font-size:9.4px;color:#1a1a1a">Nueva</div>
<div class="a" style="left:1617px;top:159px;width:8px;height:591px;background:#cfe2f5"></div>
<div class="a" style="left:1625px;top:115px;width:15px;height:635px;background:#fafafa"></div>
<svg class="a" style="left:1627px;top:130px" width="11" height="7"><path d="M1 6L5.5 1.5L10 6" stroke="#b4b4b4" stroke-width="2" fill="none"/></svg>
<svg class="a" style="left:1627px;top:734px" width="11" height="7"><path d="M1 1L5.5 5.5L10 1" stroke="#b4b4b4" stroke-width="2" fill="none"/></svg>

<div class="a" style="left:412px;top:231px;width:694px;height:515px;box-shadow:2px 1px 9px 1px rgba(0,0,0,0.22);background:transparent"></div>
<div class="a" style="left:412px;top:230px;width:694px;height:516px;background:#d6e6f7;border:1px solid #5f7da6;border-right:2px solid #6d90b8;border-bottom:2px solid #6d90b8"></div>
<div class="a" style="left:1103px;top:258px;width:1px;height:465px;background:#f4fbff"></div>
<div class="a" style="left:412px;top:230px;width:694px;height:27px;background:#0666b9;border-top:1px solid #0a56a0;border-bottom:1px solid #0a58a4"></div>
<div class="a" style="left:420px;top:237px;width:14px;height:14px;background:#fff"></div>
<svg class="a" style="left:421px;top:238px" width="12" height="12"><ellipse cx="6" cy="6.5" rx="4" ry="3.7" fill="none" stroke="#2e8fd8" stroke-width="1.8"/><path d="M2.5 6.5H9.5" stroke="#2e8fd8" stroke-width="1.5"/><path d="M1 9C3 3 8 1 11 2" stroke="#e8c020" stroke-width="1" fill="none"/></svg>
<div class="t" style="left:438px;top:238.5px;font-size:10.6px;font-weight:normal;color:#f4f8fc;">http://crm.navidian.net/?mode=2&amp;parms=5&amp;IDlinea=30&amp;IDactiv=858712e5-c783-444c-a7d9-8b93d8719f1d - Navi...</div>
<div class="a" style="left:1000px;top:243px;width:9px;height:1px;background:#fff"></div>
<div class="a" style="left:1039px;top:239px;width:9px;height:9px;border:1px solid #4d8bcc"></div>
<svg class="a" style="left:1079px;top:238px" width="11" height="11"><path d="M1 1L10 10M10 1L1 10" stroke="#fff" stroke-width="1.2"/></svg>
<div class="a" style="left:413px;top:257px;width:691px;height:1px;background:#b9c2cc"></div>
<div class="a" style="left:413px;top:258px;width:2px;height:465px;background:#5b6f8b"></div>
<div class="a" style="left:415px;top:258px;width:131px;height:465px;background:#efefea"></div>
<div class="a" style="left:415px;top:258px;width:131px;height:2px;background:#e4ecf6"></div>
<div class="a" style="left:415px;top:260px;width:131px;height:20px;background:linear-gradient(#eaf1fb 0%,#c9daf4 45%,#a9c3ec 80%,#9fbbe8 100%)"></div>
<div class="t" style="left:415px;top:265.7px;width:131px;text-align:center;font-size:11.8px;font-weight:bold;color:#111">OPORTUNIDAD</div>
<div class="a" style="left:415px;top:280px;width:131px;height:34px;background:#fde5a8;border-top:1px solid #f5c67a;border-bottom:1px solid #f5c67a"></div>
<svg class="a" style="left:422px;top:288px" width="17" height="17"><text x="0" y="15" font-family="Liberation Sans" font-weight="bold" font-size="16" fill="#2a9a2a">$</text><circle cx="12" cy="4" r="3" fill="#777"/><path d="M7 15C7 8 17 8 17 15Z" fill="#2f7ad0"/><circle cx="11.5" cy="10" r="2.7" fill="#3d8ae0"/></svg>
<div class="t" style="left:445px;top:293.5px;font-size:10.3px;font-weight:bold;color:#111;">INFORMACIÓN</div>
<div class="a" style="left:415px;top:346px;width:131px;height:1px;background:#dcdcd5"></div>
<div class="a" style="left:415px;top:347px;width:131px;height:1px;background:#fafaf8"></div>
<svg class="a" style="left:423px;top:323px" width="16" height="16"><rect x="1.5" y="1.5" width="10" height="12" fill="#e8eef8" stroke="#8a9ac0"/><path d="M4 8L7 11L12 3" stroke="#d03030" stroke-width="2" fill="none"/></svg>
<div class="t" style="left:445px;top:325.7px;font-size:10.1px;font-weight:bold;color:#7c7c7c;">ACTIVIDADES</div>
<div class="a" style="left:415px;top:379px;width:131px;height:1px;background:#dcdcd5"></div>
<div class="a" style="left:415px;top:380px;width:131px;height:1px;background:#fafaf8"></div>
<svg class="a" style="left:423px;top:356px" width="16" height="16"><path d="M1 5L5 2L8 5L5 8Z" fill="#3060c0"/><path d="M3 8C6 6 12 5 14 6L12 13C9 14 5 14 2 12Z" fill="#e8c030" stroke="#a08010"/></svg>
<div class="t" style="left:445px;top:358.7px;font-size:10.1px;font-weight:bold;color:#7c7c7c;">NOTAS</div>
<div class="a" style="left:415px;top:413px;width:131px;height:1px;background:#dcdcd5"></div>
<div class="a" style="left:415px;top:414px;width:131px;height:1px;background:#fafaf8"></div>
<svg class="a" style="left:423px;top:390px" width="16" height="16"><rect x="1.5" y="1.5" width="12" height="11" fill="#eef2f8" stroke="#6a7a90"/><rect x="1.5" y="1.5" width="12" height="3" fill="#8aa0c0"/><path d="M11 8V16M7 12H15" stroke="#21a020" stroke-width="3"/></svg>
<div class="t" style="left:445px;top:392.7px;font-size:10.1px;font-weight:bold;color:#7c7c7c;">AGRUPAR</div>
<div class="a" style="left:546px;top:258px;width:2px;height:465px;background:#f5f8fc"></div>
<div class="a" style="left:548px;top:258px;width:556px;height:2px;background:#dde8f6"></div>
<div class="a" style="left:548px;top:260px;width:556px;height:21px;background:linear-gradient(#c4d7f4,#b7cef1);border-bottom:1px solid #8d9fb9"></div>
<div class="t" style="left:554px;top:265.5px;font-size:9.4px;font-weight:normal;color:#1f4f9a;">Archivo</div>
<div class="t" style="left:598px;top:265.5px;font-size:9.4px;font-weight:normal;color:#1f4f9a;">Opciones</div>
<div class="t" style="left:650px;top:265.5px;font-size:9.4px;font-weight:normal;color:#1f4f9a;">Ayuda</div>
<div class="a" style="left:769px;top:260px;width:1px;height:20px;background:#8d9fb9"></div>
<div class="a" style="left:770px;top:260px;width:1px;height:20px;background:#e4effb"></div>
<div class="t" style="left:771px;top:265px;width:333px;text-align:center;font-size:10.3px;font-weight:bold;color:#111">Sistema enlace HT3500</div>
<div class="a" style="left:548px;top:281px;width:556px;height:22px;background:linear-gradient(#b9cff2,#b3caef)"></div>
<svg class="a" style="left:553px;top:285px" width="12" height="14"><path d="M1.5 1.5H7L10.5 5V12.5H1.5Z" fill="#fff" stroke="#111" stroke-width="1.3" stroke-linejoin="round"/></svg>
<svg class="a" style="left:576px;top:286px" width="13" height="13"><rect x="0.5" y="0.5" width="12" height="12" fill="#222"/><rect x="2.5" y="1.5" width="8" height="4.5" fill="#e8e070"/><rect x="3.5" y="8.5" width="6" height="4" fill="#e8e070"/><rect x="6.5" y="9.5" width="2" height="2" fill="#222"/></svg>
<svg class="a" style="left:596px;top:286px" width="1" height="13"><path d="M0.5 0V12" stroke="#8898b0"/></svg>
<svg class="a" style="left:603px;top:286px" width="15" height="13"><path d="M3 4L5 1H12L11 4Z" fill="#fff" stroke="#111"/><rect x="1" y="4.5" width="13" height="6" rx="2" fill="#555" stroke="#111" stroke-width="1.3"/><rect x="3" y="9" width="9" height="3" fill="#ccc" stroke="#111"/></svg>
<svg class="a" style="left:628px;top:286px" width="12" height="12"><path d="M1 1L11 11M11 1L1 11" stroke="#7a7a7a" stroke-width="1.4"/></svg>
<svg class="a" style="left:646px;top:286px" width="1" height="13"><path d="M0.5 0V12" stroke="#8898b0"/></svg>
<svg class="a" style="left:656px;top:285px" width="13" height="14"><path d="M1.5 0.5H8L11.5 4V13.5H1.5Z" fill="#fff" stroke="#222"/><path d="M4 6A2.5 2.5 0 0 1 8.5 5M9 8A2.5 2.5 0 0 1 4.5 9" stroke="#30a030" stroke-width="1.6" fill="none"/></svg>
<svg class="a" style="left:676px;top:286px" width="1" height="13"><path d="M0.5 0V12" stroke="#8898b0"/></svg>
<svg class="a" style="left:683px;top:285px" width="14" height="13"><path d="M1 4H5L6 2.5H12V12H1Z" fill="#a8a8a8" stroke="#8a8a8a"/><rect x="3" y="1" width="4" height="3" fill="#bbb"/></svg>
<div class="a" style="left:558px;top:326px;width:546px;height:390px;border:1px solid #93a3ba;border-right:none;background:#d6e6f7"></div>
<div class="a" style="left:558px;top:310px;width:88px;height:17px;background:#d6e6f7;border:1px solid #93a3ba;border-bottom:none;border-top:3px solid #f0a53a"></div>
<div class="t" style="left:558px;top:315px;width:88px;text-align:center;font-size:9.6px;color:#1a1a1a">General</div>
<div class="a" style="left:650px;top:310px;width:88px;height:17px;background:linear-gradient(#f3f6fc,#e2eaf6);border:1px solid #9aa8bd"></div>
<div class="t" style="left:650px;top:315px;width:88px;text-align:center;font-size:9.6px;color:#1a1a1a">Detalle</div>
<div class="t" style="left:574px;top:347.0px;font-size:9.6px;font-weight:normal;color:#1a1a1a;">Código</div>
<div class="a" style="left:662px;top:343px;width:71px;height:16px;background:#e9eef8;border:1px solid #c5d2e4"></div>
<div class="t" style="left:662px;top:346.5px;width:66px;text-align:right;font-size:9.6px;color:#999">4</div>
<div class="t" style="left:818px;top:347.5px;font-size:9.6px;font-weight:normal;color:#2238c4;">Tipo de Oportunidad »</div>
<div class="a" style="left:915px;top:343px;width:145px;height:17px;background:#fff;border:1px solid #9a9a9a;border-top:2px solid #555;border-left:2px solid #555"></div>
<div class="a" style="left:918px;top:345px;width:124px;height:13px;background:#0a76d6"></div>
<div class="t" style="left:919px;top:347.0px;font-size:9.6px;font-weight:normal;color:#fff;">Productos</div>
<div class="a" style="left:1043px;top:345px;width:16px;height:14px;background:#f4f4f4;border:1px solid #8a8a8a"></div>
<svg class="a" style="left:1047px;top:349.5px" width="9" height="6"><path d="M1 1L4.5 4.5L8 1" stroke="#111" stroke-width="1.6" fill="none"/></svg>
<div class="t" style="left:574px;top:369.5px;font-size:9.6px;font-weight:normal;color:#b02a2a;">Tema *</div>
<div class="a" style="left:662px;top:365px;width:389px;height:17px;background:#fff;border:1px solid #a4b7d1"></div>
<div class="t" style="left:665px;top:369.0px;font-size:9.6px;font-weight:normal;color:#111;">Sistema enlace HT3500</div>
<div class="t" style="left:574px;top:391.5px;font-size:9.6px;font-weight:normal;color:#b02a2a;">Entidad *</div>
<div class="a" style="left:662px;top:388px;width:89px;height:16px;background:#e9eef8;border:1px solid #c5d2e4"></div>
<div class="t" style="left:665px;top:391.5px;font-size:9.6px;font-weight:normal;color:#9a9a9a;">23456</div>
<div class="a" style="left:750px;top:388px;width:19px;height:16px;background:linear-gradient(#e4ecf8,#bccde8);border:1px solid #8aa2c6"></div>
<svg class="a" style="left:753px;top:391px" width="13" height="11"><rect x="0.5" y="0.5" width="11" height="9" fill="#fff" stroke="#4a6aa0"/><rect x="0.5" y="0.5" width="11" height="2" fill="#6a8ad0"/><circle cx="7" cy="6" r="2.5" stroke="#555" fill="none"/><path d="M9 8L11.5 10.5" stroke="#b07a20" stroke-width="1.5"/></svg>
<div class="t" style="left:776px;top:391.5px;font-size:9.6px;font-weight:normal;color:#666;">empresa sa</div>
<div class="t" style="left:574px;top:413.5px;font-size:9.6px;font-weight:normal;color:#1a1a1a;">Contacto</div>
<div class="a" style="left:662px;top:410px;width:177px;height:16px;background:#fff;border:1px solid #a4b7d1"></div>
<div class="t" style="left:665px;top:413.5px;font-size:9.6px;font-weight:normal;color:#111;">josep lluis</div>
<div class="a" style="left:838px;top:410px;width:19px;height:16px;background:linear-gradient(#e4ecf8,#bccde8);border:1px solid #8aa2c6"></div>
<svg class="a" style="left:841px;top:413px" width="13" height="11"><rect x="0.5" y="0.5" width="11" height="9" fill="#fff" stroke="#4a6aa0"/><rect x="0.5" y="0.5" width="11" height="2" fill="#6a8ad0"/><circle cx="7" cy="6" r="2.5" stroke="#555" fill="none"/><path d="M9 8L11.5 10.5" stroke="#b07a20" stroke-width="1.5"/></svg>
<div class="t" style="left:574px;top:436.5px;font-size:9.6px;font-weight:normal;color:#1a1a1a;">Prioridad</div>
<div class="a" style="left:662px;top:432px;width:145px;height:17px;background:#fff;border:1px solid #9a9a9a;border-top:2px solid #555;border-left:2px solid #555"></div>
<div class="t" style="left:666px;top:436.0px;font-size:9.6px;font-weight:normal;color:#111;">Normal</div>
<div class="a" style="left:790px;top:434px;width:16px;height:14px;background:#f4f4f4;border:1px solid #8a8a8a"></div>
<svg class="a" style="left:794px;top:438.5px" width="9" height="6"><path d="M1 1L4.5 4.5L8 1" stroke="#111" stroke-width="1.6" fill="none"/></svg>
<div class="t" style="left:574px;top:457.0px;font-size:9.6px;font-weight:normal;color:#2238c4;">Fase Oportunidad »</div>
<div class="a" style="left:662px;top:453px;width:145px;height:17px;background:#fff;border:1px solid #9a9a9a;border-top:2px solid #555;border-left:2px solid #555"></div>
<div class="t" style="left:666px;top:457.0px;font-size:9.6px;font-weight:normal;color:#111;">Envío Presupuesto</div>
<div class="a" style="left:790px;top:455px;width:16px;height:14px;background:#f4f4f4;border:1px solid #8a8a8a"></div>
<svg class="a" style="left:794px;top:459.5px" width="9" height="6"><path d="M1 1L4.5 4.5L8 1" stroke="#111" stroke-width="1.6" fill="none"/></svg>
<div class="a" style="left:574px;top:482px;width:504px;height:2px;background:#97a7bd;border-bottom:1px solid #eef4fb"></div>
<div class="t" style="left:574px;top:502.5px;font-size:9.6px;font-weight:normal;color:#2238c4;">Fecha Est. Cierre »</div>
<div class="a" style="left:663px;top:499px;width:70px;height:17px;background:#fff;border:1px solid #a4b7d1"></div>
<div class="t" style="left:666px;top:503.0px;font-size:9.6px;font-weight:normal;color:#111;">24/01/2019</div>
<div class="a" style="left:732px;top:499px;width:19px;height:17px;background:linear-gradient(#e4ecf8,#bccde8);border:1px solid #8aa2c6"></div>
<svg class="a" style="left:735px;top:502px" width="14" height="11"><rect x="0.5" y="0.5" width="12" height="9" fill="#fff" stroke="#556"/><rect x="0.5" y="0.5" width="12" height="2" fill="#7a8ab0"/><path d="M3 3V9M6 3V9M0.5 6H12.5" stroke="#99a"/><ellipse cx="9" cy="6" rx="3" ry="2" stroke="#d02020" stroke-width="1.3" fill="none"/></svg>
<div class="t" style="left:837px;top:502.5px;font-size:9.6px;font-weight:normal;color:#1a1a1a;">Fecha Real Cierre</div>
<div class="a" style="left:926px;top:499px;width:70px;height:16px;background:#e9eef8;border:1px solid #c5d2e4"></div>
<svg class="a" style="left:997px;top:502px" width="15" height="11"><rect x="0.5" y="0.5" width="13" height="9" fill="#e8e8e8" stroke="#888"/><rect x="0.5" y="0.5" width="13" height="2" fill="#999"/><path d="M3.5 3V9.5M6.5 3V9.5M0.5 6H13.5" stroke="#aaa"/><ellipse cx="9.5" cy="6" rx="3" ry="2" stroke="#777" stroke-width="1.2" fill="none"/></svg>
<div class="t" style="left:574px;top:527.5px;font-size:9.6px;font-weight:normal;color:#1a1a1a;">Probabilidad</div>
<div class="a" style="left:663px;top:524px;width:70px;height:16px;background:#fff;border:1px solid #a4b7d1"></div>
<div class="t" style="left:666px;top:527.5px;font-size:9.6px;font-weight:normal;color:#111;">70</div>
<div class="t" style="left:739px;top:527.5px;font-size:9.6px;font-weight:normal;color:#888;">%</div>
<div class="t" style="left:837px;top:527.5px;font-size:9.6px;font-weight:normal;color:#1a1a1a;">Situación</div>
<div class="a" style="left:926px;top:524px;width:144px;height:17px;background:#fff;border:1px solid #9a9a9a;border-top:2px solid #555;border-left:2px solid #555"></div>
<div class="t" style="left:930px;top:528.0px;font-size:9.6px;font-weight:normal;color:#111;">En Proceso</div>
<div class="a" style="left:1053px;top:526px;width:16px;height:14px;background:#f4f4f4;border:1px solid #8a8a8a"></div>
<svg class="a" style="left:1057px;top:530.5px" width="9" height="6"><path d="M1 1L4.5 4.5L8 1" stroke="#111" stroke-width="1.6" fill="none"/></svg>
<div class="t" style="left:574px;top:549.5px;font-size:9.6px;font-weight:normal;color:#1a1a1a;">Fact. Estimada</div>
<div class="a" style="left:663px;top:546px;width:70px;height:16px;background:#fff;border:1px solid #a4b7d1"></div>
<div class="t" style="left:663px;top:549.5px;width:65px;text-align:right;font-size:9.6px;color:#111">20000,00</div>
<div class="t" style="left:740px;top:549.5px;font-size:9.6px;font-weight:normal;color:#888;">Importe</div>
<div class="t" style="left:837px;top:549.5px;font-size:9.6px;font-weight:normal;color:#1a1a1a;">Ingresos Reales</div>
<div class="a" style="left:926px;top:546px;width:70px;height:16px;background:#e9eef8;border:1px solid #c5d2e4"></div>
<div class="t" style="left:926px;top:549.5px;width:65px;text-align:right;font-size:9.6px;color:#a0a0a0">0,00</div>
<div class="t" style="left:1002px;top:549.5px;font-size:9.6px;font-weight:normal;color:#888;">Importe</div>
<div class="a" style="left:574px;top:599px;width:518px;height:104px;border:1px solid #93a3ba;background:#d6e6f7"></div>
<div class="a" style="left:574px;top:582px;width:88px;height:18px;background:#d6e6f7;border:1px solid #93a3ba;border-bottom:none;border-top:3px solid #f0a53a"></div>
<div class="t" style="left:574px;top:587px;width:88px;text-align:center;font-size:9.6px;color:#1a1a1a">Notas 1</div>
<div class="a" style="left:667px;top:582px;width:88px;height:17px;background:linear-gradient(#f3f6fc,#e2eaf6);border:1px solid #9aa8bd"></div>
<div class="t" style="left:667px;top:587px;width:88px;text-align:center;font-size:9.6px;color:#1a1a1a">Notas 2</div>
<div class="a" style="left:759px;top:582px;width:89px;height:17px;background:linear-gradient(#f3f6fc,#e2eaf6);border:1px solid #9aa8bd"></div>
<div class="t" style="left:759px;top:587px;width:89px;text-align:center;font-size:9.6px;color:#1a1a1a">Notas 3</div>
<div class="a" style="left:852px;top:582px;width:89px;height:17px;background:linear-gradient(#f3f6fc,#e2eaf6);border:1px solid #9aa8bd"></div>
<div class="t" style="left:852px;top:587px;width:89px;text-align:center;font-size:9.6px;color:#1a1a1a">Notas 4</div>
<div class="a" style="left:945px;top:582px;width:88px;height:17px;background:linear-gradient(#f3f6fc,#e2eaf6);border:1px solid #9aa8bd"></div>
<div class="t" style="left:945px;top:587px;width:88px;text-align:center;font-size:9.6px;color:#1a1a1a">Notas 5</div>
<div class="a" style="left:582px;top:603px;width:498px;height:89px;background:#fff;border:1px solid #9aabc2"></div>
<div class="t" style="left:584px;top:606.5px;font-size:9.6px;font-weight:normal;color:#111;">Comentado tema de complementos</div>
<div class="a" style="left:1063px;top:604px;width:16px;height:87px;background:#fafafa"></div>
<svg class="a" style="left:1066px;top:619px" width="10" height="7"><path d="M1 6L5 2L9 6" stroke="#b4b4b4" stroke-width="1.4" fill="none"/></svg>
<svg class="a" style="left:1066px;top:667px" width="10" height="7"><path d="M1 1L5 5L9 1" stroke="#b4b4b4" stroke-width="1.4" fill="none"/></svg>
<div class="a" style="left:413px;top:723px;width:691px;height:21px;background:#f1efeb;border-top:1px solid #dedcd8"></div>
<div class="t" style="left:415px;top:729.5px;font-size:10.6px;font-weight:normal;color:#1a1a1a;">Modificando...</div>
<svg class="a" style="left:1026px;top:728px" width="12" height="12"><circle cx="4.5" cy="4.5" r="3.5" fill="#cfe3f8" stroke="#3a78c8" stroke-width="1.2"/><path d="M7 7L11 11" stroke="#333" stroke-width="1.8"/><path d="M2.5 4.5H6.5M4.5 2.5V6.5" stroke="#3a78c8"/></svg>
<div class="t" style="left:1039px;top:729.5px;font-size:10.6px;font-weight:normal;color:#1a1a1a;">100%</div>
<svg class="a" style="left:1077px;top:732px" width="8" height="5"><path d="M0 0H7L3.5 4Z" fill="#222"/></svg>
<svg class="a" style="left:1096px;top:737px" width="8" height="8"><rect x="6" y="6" width="1" height="1" fill="#999"/><rect x="3" y="6" width="1" height="1" fill="#999"/><rect x="6" y="3" width="1" height="1" fill="#999"/></svg>


</body></html>
